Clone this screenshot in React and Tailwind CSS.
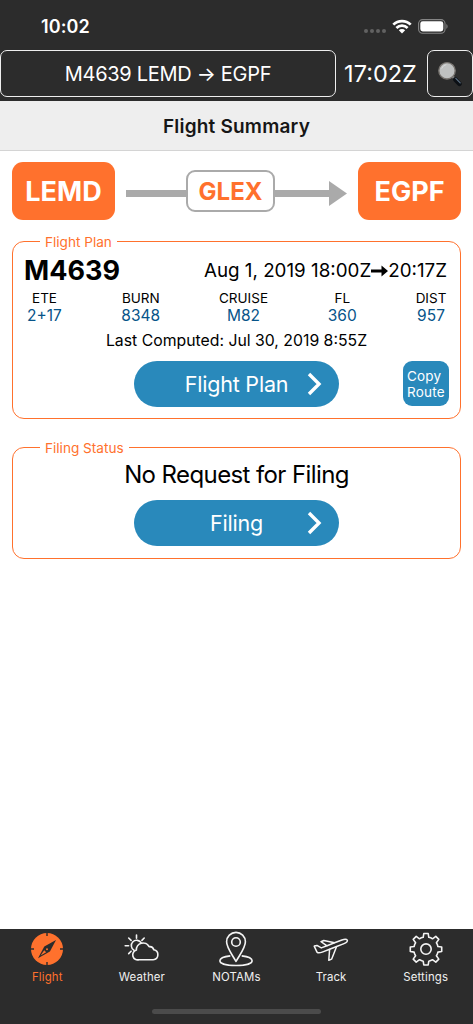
import clsx from 'clsx';

const stats = [
  { label: 'ETE', value: '2+17', width: 'w-[41px]' },
  { label: 'BURN', value: '8348', width: 'w-[42px]' },
  { label: 'CRUISE', value: 'M82', width: 'w-[54px]' },
  { label: 'FL', value: '360', width: 'w-[34px]' },
  { label: 'DIST', value: '957', width: 'w-[34px]' },
];

const tabs = [
  { id: 'flight', label: 'Flight', Icon: CompassIcon },
  { id: 'weather', label: 'Weather', Icon: WeatherIcon },
  { id: 'notams', label: 'NOTAMs', Icon: PinIcon },
  { id: 'track', label: 'Track', Icon: PlaneIcon },
  { id: 'settings', label: 'Settings', Icon: GearIcon },
];

function CompassIcon() {
  return (
    <svg width="34" height="34" viewBox="0 0 34 34">
      <circle cx="17" cy="17" r="16" fill="#ff712d" />
      <path d="M17 0v4M17 30v4M0 17h4M30 17h4" stroke="#2c2c2c" strokeWidth="1.4" />
      <path d="M26 8 19.9 19.6 8 26.2l6.3-11.6z" fill="#2c2c2c" />
      <path d="M14.2 18.2 10.6 23.6l5.6-3.3z" fill="#ff712d" />
      <circle cx="17" cy="17.3" r="1" fill="#ff712d" />
    </svg>
  );
}

function WeatherIcon() {
  return (
    <svg width="36" height="34" viewBox="0 0 36 34" fill="none" stroke="#f4f4f4" strokeWidth="1.6" strokeLinecap="round" strokeLinejoin="round">
      <path d="M15 27.7h14.2a5 5 0 0 0 .6-9.9 4.2 4.2 0 0 0-4.7-3.1 6.7 6.7 0 0 0-12.7 3.4A4.9 4.9 0 0 0 15 27.7z" />
      <path d="M10 18.2a5.3 5.3 0 1 1 7.3-7.1" />
      <path d="M12.5 3v3.3M4.7 6l2.4 2.4M20.2 6l-2.3 2.4M1.2 13.8h3.4M4.7 21.6l2.4-2.4" />
    </svg>
  );
}

function PinIcon() {
  return (
    <svg width="36" height="36" viewBox="0 0 36 36" fill="none" stroke="#f4f4f4" strokeWidth="1.6" strokeLinejoin="round">
      <path d="M18 30.5C15.2 25 8.6 17.2 8.6 10.8a9.4 9.4 0 0 1 18.8 0C27.4 17.2 20.8 25 18 30.5z" />
      <circle cx="18" cy="11" r="4.3" />
      <path d="M12.3 24.9C5.5 25.6 1.9 27.4 1.9 29.8c0 2.8 6.8 4.7 16.1 4.7s16.1-1.9 16.1-4.7c0-2.4-3.6-4.2-10.4-4.9" />
    </svg>
  );
}

function PlaneIcon() {
  return (
    <svg width="36" height="34" viewBox="0 0 36 34" fill="none" stroke="#f4f4f4" strokeWidth="1.5" strokeLinejoin="round">
      <path d="M1.2 14.1 4 13.4l4.3 2.5 5.7-2.1-6-4.1 2.8-1.2 10.8 2.3 7.3-2.8c2.3-.8 4.7-.8 5.4.1.7 1.1-1 2.6-3.3 3.5l-7.4 2.9-4.9 12.6-2.9 1.1.8-10.9-7.4 2.8c-2.4.9-4.3.9-5.2 0z" />
      <path d="m14 13.8 7.6-3M16.6 17.3l7-2.8" />
    </svg>
  );
}

function GearIcon() {
  return (
    <svg width="34" height="34" viewBox="0 0 34 34" fill="none" stroke="#f4f4f4" strokeWidth="1.6" strokeLinejoin="round">
      <path d="M14.8 1.5h4.4l.6 3.8q2.1.4 3.7 1.5l3.3-2.4 3 3-2.4 3.3q1.1 1.6 1.5 3.8l3.8.5v4.5l-3.8.6q-.4 2.1-1.5 3.7l2.4 3.3-3 3-3.3-2.4q-1.6 1.1-3.7 1.5l-.6 3.8h-4.4l-.6-3.8q-2.1-.4-3.7-1.5l-3.3 2.4-3-3 2.4-3.3q-1.1-1.6-1.5-3.7l-3.8-.6V15l3.8-.5q.4-2.2 1.5-3.8L4.2 7.4l3-3 3.3 2.4q1.6-1.1 3.7-1.5z" />
      <circle cx="17" cy="17.1" r="5.2" />
    </svg>
  );
}

function SearchIcon() {
  return (
    <svg width="26" height="28" viewBox="0 0 26 28">
      <path d="m15.2 16.2 3.4 3.4" stroke="#8b8b8b" strokeWidth="2.4" />
      <path d="m18.2 19.4 4.3 4.4" stroke="#0c1015" strokeWidth="4.6" strokeLinecap="round" />
      <path d="m18.8 18.4 4.4 4.5" stroke="#5d7084" strokeWidth="1.2" strokeLinecap="round" />
      <circle cx="10" cy="10.8" r="8.2" fill="#bfc1c1" stroke="#77736f" strokeWidth="1.4" />
      <path d="M4.7 8.6a6 6 0 0 1 4.6-4" fill="none" stroke="#d9dada" strokeWidth="1" />
    </svg>
  );
}

function StatusBar() {
  return (
    <div className="flex h-[50px] items-center justify-between pt-[2px] pr-[25px] pl-[41px] text-white">
      <span className="text-[18px] font-semibold tracking-[0.1px]">10:02</span>
      <div className="flex items-center gap-[6px]">
        <div className="flex gap-[2px] pt-[9px]">
          {[0, 1, 2, 3].map((dot) => (
            <span key={dot} className="size-[4px] rounded-full bg-[#626262]" />
          ))}
        </div>
        <svg width="20" height="15" viewBox="0 0 20 15" fill="none" stroke="#fff" strokeWidth="2.7">
          <path d="M1.3 5.6a12.4 12.4 0 0 1 17.4 0" />
          <path d="M4.4 9a8 8 0 0 1 11.2 0" />
          <path d="M10 14.5 6.8 11.3a4.6 4.6 0 0 1 6.4 0z" fill="#fff" stroke="none" />
        </svg>
        <svg width="30" height="15" viewBox="0 0 30 15">
          <rect x=".6" y=".6" width="26.4" height="13.6" rx="4" fill="none" stroke="#858585" strokeWidth="1.1" />
          <rect x="2.3" y="2.3" width="23" height="10.2" rx="2.4" fill="#fff" />
          <path d="M28.4 5v4.8c1.5-.7 1.5-4.1 0-4.8z" fill="#858585" />
        </svg>
      </div>
    </div>
  );
}

function Airport({ code }) {
  return (
    <div className="flex h-[58px] w-[103px] items-center justify-center rounded-[11px] bg-[#ff712d] pt-[3px] text-[27px] font-bold text-white">
      {code}
    </div>
  );
}

function Panel({ title, className, children }) {
  return (
    <fieldset className={clsx('mx-3 rounded-[12px] border border-[#ff712d] px-[11px]', className)}>
      <legend className="ml-[16px] h-[18px] px-[5px] text-[13.6px] leading-[20px] text-[#ff712d]">{title}</legend>
      {children}
    </fieldset>
  );
}

function PillButton({ children }) {
  return (
    <button className="grid h-[46px] w-[205px] grid-cols-[1fr_auto_1fr] items-center rounded-full bg-[#2989bb] text-[21.5px] tracking-[-0.2px] text-white">
      <span className="col-start-2">{children}</span>
      <svg className="mr-[16px] justify-self-end" width="16" height="24" viewBox="0 0 16 24">
        <path d="m2 2 10 10L2 22" fill="none" stroke="#fff" strokeWidth="3.4" />
      </svg>
    </button>
  );
}

function App() {
  return (
    <div className="flex h-screen flex-col bg-white font-['Inter',sans-serif] text-black">
      <header className="h-[101px] bg-[#2c2c2c]">
        <StatusBar />
        <div className="flex h-[47px] text-white">
          <button className="w-[336px] rounded-[7px] border border-[#eee] text-[20px] tracking-[-0.3px]">
            M4639 LEMD → EGPF
          </button>
          <span className="flex flex-1 items-center justify-center pr-[2px] text-[23.5px]">17:02Z</span>
          <button className="flex w-[46px] items-center justify-center rounded-[7px] border border-[#eee]">
            <SearchIcon />
          </button>
        </div>
      </header>

      <h1 className="flex h-[50px] items-center justify-center border-b border-[#d4d4d4] bg-[#eee] pt-[3px] text-[19px] font-semibold tracking-[0.2px] text-[#161616]">
        Flight Summary
      </h1>

      <main className="flex-1">
        {/* Route */}
        <div className="flex items-center justify-between px-3 pt-[11px]">
          <Airport code="LEMD" />
          <div className="flex items-center">
            <div className="mt-[4px] h-[7px] w-[60px] bg-[#aaa]" />
            <div className="flex h-[42px] w-[89px] items-center justify-center rounded-[9px] border-2 border-[#aaa] pt-px text-[24px] font-bold text-[#ff712d]">
              GLEX
            </div>
            <div className="mt-[4px] h-[7px] w-[54px] bg-[#aaa]" />
            <svg className="mt-[4px]" width="18" height="25" viewBox="0 0 18 25">
              <path d="M0 0v25l18-12.5z" fill="#aaa" />
            </svg>
          </div>
          <Airport code="EGPF" />
        </div>

        <Panel title="Flight Plan" className="mt-[12px] h-[187px]">
          <div className="mt-px flex h-[38px] items-center justify-between pt-[2px]">
            <span className="pt-px text-[27px] font-bold">M4639</span>
            <span className="flex items-center pr-[2px] text-[18.8px]">
              Aug 1, 2019 18:00Z
              <svg width="17" height="12" viewBox="0 0 17 12">
                <path d="M0 4.4h10.5V.6L17 6l-6.5 5.4V7.6H0z" />
              </svg>
              20:17Z
            </span>
          </div>
          <div className="flex justify-between pr-[1px] text-center">
            {stats.map((stat) => (
              <div key={stat.label} className={clsx('flex flex-col items-center', stat.width)}>
                <span className="text-[13.5px] leading-[18px]">{stat.label}</span>
                <span className="text-[15.5px] leading-[18px] text-[#075489]">{stat.value}</span>
              </div>
            ))}
          </div>
          <p className="mt-[6px] text-center text-[15.8px] leading-[20px]">Last Computed: Jul 30, 2019 8:55Z</p>
          <div className="mt-[10px] grid grid-cols-[1fr_auto_1fr]">
            <div className="col-start-2">
              <PillButton>Flight Plan</PillButton>
            </div>
            <button className="h-[45px] w-[46px] justify-self-end rounded-[9px] bg-[#2989bb] pl-[4px] text-left text-[13.5px] leading-[16px] tracking-[0.2px] text-white">
              Copy Route
            </button>
          </div>
        </Panel>

        <Panel title="Filing Status" className="mt-[19px] h-[121px]">
          <p className="mt-[3px] text-center text-[24px] leading-[32px] tracking-[-0.6px]">No Request for Filing</p>
          <div className="mt-[9px] flex justify-center">
            <PillButton>Filing</PillButton>
          </div>
        </Panel>
      </main>

      <nav className="flex h-[95px] flex-col items-center bg-[#2c2c2c]">
        <div className="flex w-full">
          {tabs.map(({ id, label, Icon }) => (
            <button key={id} className={clsx('flex flex-1 flex-col items-center', id === 'flight' ? 'text-[#ff712d]' : 'text-[#f0f0f0]')}>
              <span className="flex h-[40px] items-center">
                <Icon />
              </span>
              <span className="text-[11.4px] leading-[16px] tracking-[0.15px]">{label}</span>
            </button>
          ))}
        </div>
        <div className="mt-[24px] h-[5px] w-[169px] rounded-full bg-[#4b4b4b]" />
      </nav>
    </div>
  );
}

export default App;
